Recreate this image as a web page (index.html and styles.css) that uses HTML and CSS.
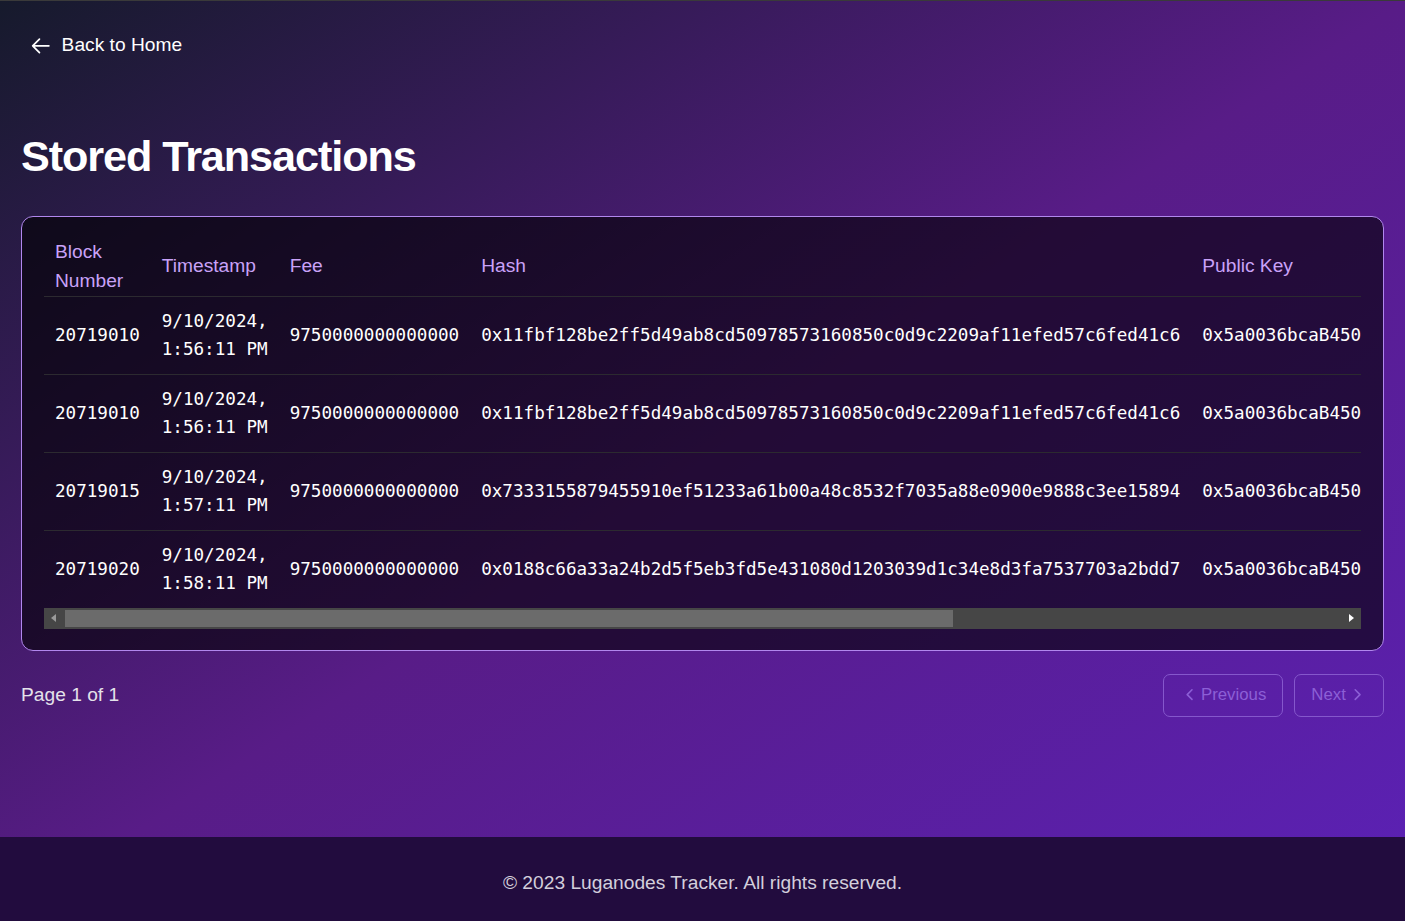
FILE: index.html
```html
<!DOCTYPE html>
<html lang="en">
<head>
<meta charset="utf-8">
<title>Stored Transactions</title>
<link rel="stylesheet" href="styles.css">
</head>
<body>
<div class="page">
  <main class="main">
    <a class="back-link" href="#">
      <svg class="back-icon" viewBox="0 0 24 24" fill="none" stroke="currentColor" stroke-width="2" stroke-linecap="round" stroke-linejoin="round"><path d="M10.5 19.5 3 12m0 0 7.5-7.5M3 12h18"/></svg>
      <span>Back to Home</span>
    </a>
    <h1 class="title">Stored Transactions</h1>
    <section class="card">
      <div class="scroller">
        <table class="tx-table">
          <thead>
            <tr>
              <th>Block Number</th>
              <th>Timestamp</th>
              <th>Fee</th>
              <th>Hash</th>
              <th>Public Key</th>
              <th class="spacer"></th>
            </tr>
          </thead>
          <tbody>
            <tr>
              <td>20719010</td>
              <td>9/10/2024, 1:56:11 PM</td>
              <td>9750000000000000</td>
              <td>0x11fbf128be2ff5d49ab8cd50978573160850c0d9c2209af11efed57c6fed41c6</td>
              <td>0x5a0036bcaB4501c3a26D6F3C1fA9E7B2d04c8a51</td>
              <td class="spacer"></td>
            </tr>
            <tr>
              <td>20719010</td>
              <td>9/10/2024, 1:56:11 PM</td>
              <td>9750000000000000</td>
              <td>0x11fbf128be2ff5d49ab8cd50978573160850c0d9c2209af11efed57c6fed41c6</td>
              <td>0x5a0036bcaB4501c3a26D6F3C1fA9E7B2d04c8a51</td>
              <td class="spacer"></td>
            </tr>
            <tr>
              <td>20719015</td>
              <td>9/10/2024, 1:57:11 PM</td>
              <td>9750000000000000</td>
              <td>0x7333155879455910ef51233a61b00a48c8532f7035a88e0900e9888c3ee15894</td>
              <td>0x5a0036bcaB4501c3a26D6F3C1fA9E7B2d04c8a51</td>
              <td class="spacer"></td>
            </tr>
            <tr>
              <td>20719020</td>
              <td>9/10/2024, 1:58:11 PM</td>
              <td>9750000000000000</td>
              <td>0x0188c66a33a24b2d5f5eb3fd5e431080d1203039d1c34e8d3fa7537703a2bdd7</td>
              <td>0x5a0036bcaB4501c3a26D6F3C1fA9E7B2d04c8a51</td>
              <td class="spacer"></td>
            </tr>
          </tbody>
        </table>
      </div>
      <div class="hscroll" aria-hidden="true">
        <div class="hscroll-btn"><span class="tri tri-left"></span></div>
        <div class="hscroll-track"><div class="hscroll-thumb"></div></div>
        <div class="hscroll-btn"><span class="tri tri-right"></span></div>
      </div>
    </section>
    <div class="pager">
      <span class="page-info">Page 1 of 1</span>
      <div class="pager-buttons">
        <button class="pager-btn" disabled>
          <svg class="chev" viewBox="0 0 24 24" fill="none" stroke="currentColor" stroke-width="2" stroke-linecap="round" stroke-linejoin="round"><path d="m15 18-6-6 6-6"/></svg>
          <span>Previous</span>
        </button>
        <button class="pager-btn" disabled>
          <span>Next</span>
          <svg class="chev" viewBox="0 0 24 24" fill="none" stroke="currentColor" stroke-width="2" stroke-linecap="round" stroke-linejoin="round"><path d="m9 18 6-6-6-6"/></svg>
        </button>
      </div>
    </div>
  </main>
  <footer class="footer">
    <p>© 2023 Luganodes Tracker. All rights reserved.</p>
  </footer>
</div>
</body>
</html>
```
FILE: styles.css
```css
* { box-sizing: border-box; }

html, body {
  margin: 0;
  padding: 0;
}

body {
  font-family: "Liberation Sans", Arial, sans-serif;
  font-size: 19.2px;
  line-height: 28.8px;
  color: #ffffff;
  background: #220c3e;
}

.page {
  min-height: 100vh;
  display: flex;
  flex-direction: column;
  border-top: 1px solid #3a3a3a;
  background: linear-gradient(to bottom right, #161a2c 0%, #581c87 50%, #5b21b6 100%);
}

.main {
  flex: 1;
  padding: 30px 21px 0;
}

.back-link {
  display: inline-flex;
  align-items: center;
  gap: 10px;
  margin-left: 9px;
  color: #ffffff;
  text-decoration: none;
}

.back-icon {
  width: 21.6px;
  height: 21.6px;
  stroke-width: 1.9;
}

.title {
  margin: 65px 0 0;
  font-size: 43.2px;
  line-height: 52px;
  font-weight: 700;
  letter-spacing: -0.025em;
}

.card {
  margin-top: 34px;
  border: 1px solid #b187ee;
  border-radius: 12px;
  background: rgba(0, 0, 0, 0.6);
  padding: 21px 22px 21px;
}

.scroller {
  overflow: hidden;
}

.tx-table {
  border-collapse: collapse;
  text-align: left;
}

.tx-table th {
  font-weight: 400;
  color: #c9a2f8;
  padding: 0 11px;
  vertical-align: middle;
  line-height: 28.8px;
}

.tx-table thead tr {
  border-bottom: 1px solid #2c2a30;
}

.tx-table tbody tr + tr {
  border-top: 1px solid #2c2a30;
}

.tx-table td {
  font-family: "DejaVu Sans Mono", "Liberation Mono", monospace;
  font-size: 17.6px;
  line-height: 28px;
  padding: 10.5px 11px;
  color: #ffffff;
  vertical-align: middle;
}

.tx-table td:nth-child(3),
.tx-table td:nth-child(4),
.tx-table td:nth-child(5) {
  white-space: nowrap;
}

.tx-table td:nth-child(2) {
  width: 128px;
}

.tx-table .spacer {
  min-width: 260px;
  width: 260px;
  padding: 0;
}

/* horizontal scrollbar of the table */
.hscroll {
  display: flex;
  height: 21px;
  background: #464646;
}

.hscroll-btn {
  width: 21px;
  flex: none;
  display: flex;
  align-items: center;
  justify-content: center;
}

.tri {
  width: 0;
  height: 0;
  border-top: 4.5px solid transparent;
  border-bottom: 4.5px solid transparent;
}

.tri-left {
  border-right: 5px solid #9a9a9a;
  margin-left: -2px;
}

.tri-right {
  border-left: 5px solid #ffffff;
  margin-left: 2px;
}

.hscroll-track {
  flex: 1;
  padding: 2px 0;
}

.hscroll-thumb {
  width: 888px;
  height: 100%;
  background: #6b6b6b;
}

.pager {
  margin-top: 23px;
  display: flex;
  justify-content: space-between;
  align-items: center;
}

.page-info {
  color: #e4e2ea;
}

.pager-buttons {
  display: flex;
  gap: 11px;
}

.pager-btn {
  display: inline-flex;
  align-items: center;
  gap: 2px;
  height: 43px;
  padding: 0 16px;
  font-family: "Liberation Sans", Arial, sans-serif;
  font-size: 16.8px;
  color: #8c5fd6;
  background: transparent;
  border: 1px solid #8557cc;
  border-radius: 7px;
}

.chev {
  width: 19.2px;
  height: 19.2px;
}

.footer {
  height: 84px;
  padding: 32px 0 0;
  background: #220c3e;
  text-align: center;
  color: #d3cfdc;
}

.footer p {
  margin: 0;
}
```
